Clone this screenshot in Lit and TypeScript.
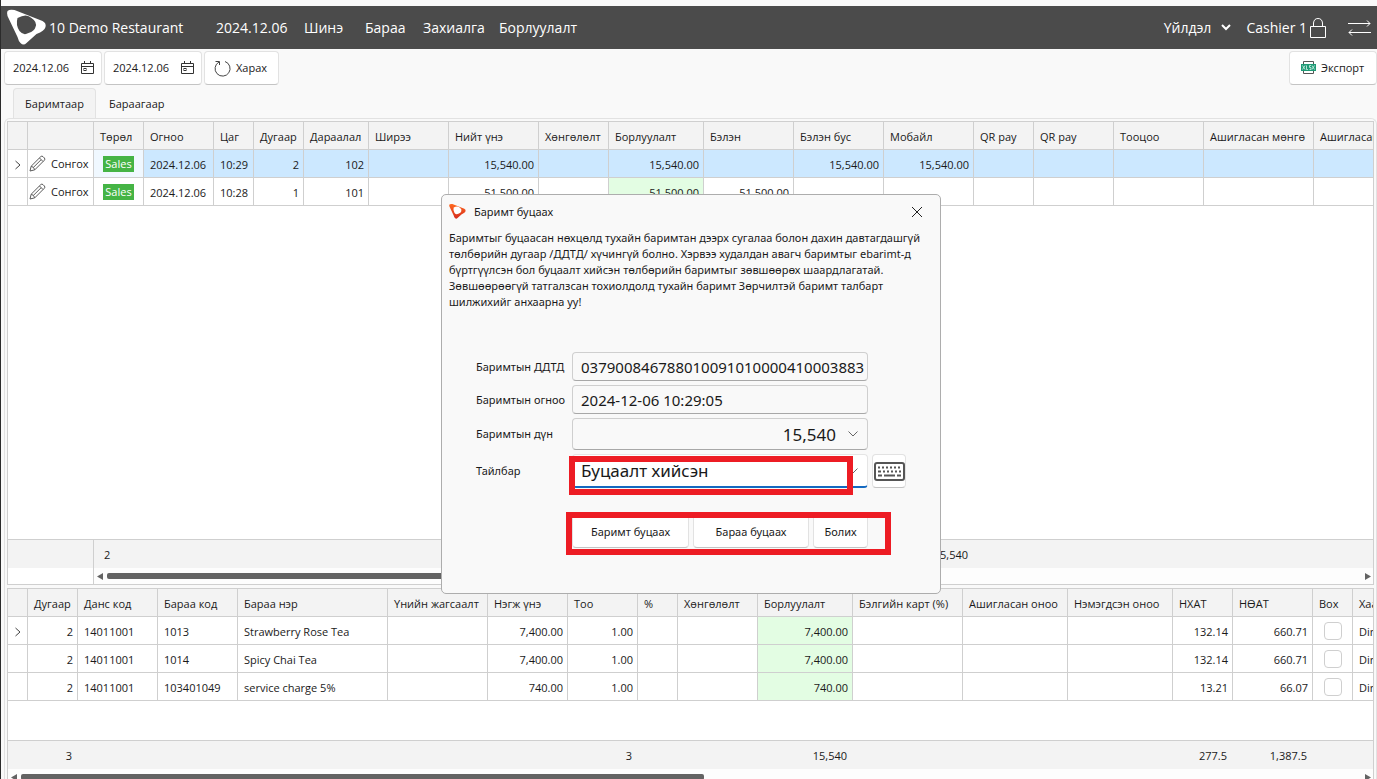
import { LitElement, html, css, nothing } from "lit";
import { customElement } from "lit/decorators.js";
import { classMap } from "lit/directives/class-map.js";

interface Column {
  title: string;
  width: number;
  align?: "right" | "center";
  green?: boolean;
  total?: string;
  totalLeft?: boolean;
}

type Row = Record<number, unknown>;

const SHAPE_OUTER = "M1 2Q3 0 8 1L36 12Q40 14 39 18Q38 22 30 25L20 34Q17 37 14 34Q12 32 11 28L1 7Q0 4 1 2Z";
const SHAPE_INNER = "M11 9Q20 4 25 9Q31 13 29 18Q28 22 22 24Q17 27 13 22Q9 16 11 9Z";

const chevronRight = html`<svg width="8" height="10" viewBox="0 0 8 10" fill="none" stroke="#444"><path d="M1.5 1L6 5L1.5 9" /></svg>`;
const chevronDown = html`<svg width="12" height="8" viewBox="0 0 12 8" fill="none" stroke="#666"><path d="M1.5 1.5L6 6L10.5 1.5" /></svg>`;
const pencil = html`<svg width="17" height="17" viewBox="0 0 17 17" fill="none" stroke="#5a5a5a">
  <path d="M1 16L2.2 11.2L11.8 1.6Q12.8 .6 14 1.6L15.4 3Q16.4 4.2 15.4 5.2L5.8 14.8Z" />
  <path d="M10.5 3L14 6.5M2.2 11.2Q4.8 11.8 5.8 14.8M12 4.8L4.3 12.5" />
</svg>`;
const calendar = html`<svg width="13" height="14" viewBox="0 0 13 14" fill="none" stroke="#333">
  <path d="M.5 2.5H12.5V12.5H.5ZM.5 5.5H12.5M3.5 0V3M9.5 0V3" /><rect x="3" y="7.5" width="2" height="2" />
</svg>`;

@customElement("data-grid")
export class DataGrid extends LitElement {
  static properties = {
    columns: { attribute: false },
    rows: { attribute: false },
    selected: { type: Number },
    frozen: { type: Boolean },
    label: { type: String },
  };
  declare columns: Column[];
  declare rows: Row[];
  declare selected: number;
  declare frozen: boolean;
  declare label: string;

  constructor() {
    super();
    this.columns = [];
    this.rows = [];
    this.selected = -1;
    this.frozen = false;
    this.label = "";
  }

  static styles = css`
    :host {
      display: flex;
      flex-direction: column;
      min-width: 0;
      border: 1px solid #cfcfcf;
      background: #fff;
      overflow: hidden;
      box-sizing: border-box;
    }
    table {
      table-layout: fixed;
      border-collapse: separate;
      border-spacing: 0;
      width: max-content;
      min-width: 100%;
    }
    th,
    td {
      box-sizing: border-box;
      height: 28px;
      padding: 2px 4px 0 6px;
      border-right: 1px solid #cfcfcf;
      border-bottom: 1px solid #cfcfcf;
      font-weight: 400;
      text-align: left;
      white-space: nowrap;
      overflow: hidden;
      line-height: 16px;
    }
    th {
      background: #f3f3f3;
    }
    .right {
      text-align: right;
    }
    .center {
      text-align: center;
    }
    td.tight {
      padding: 0;
    }
    .green {
      background: #e3fde3;
    }
    .selected td {
      background: #cce8ff;
    }
    .selected td.plain {
      background: #fff;
    }
    .selected td.focus {
      background: #f0f8ff;
    }
    .indicator svg {
      vertical-align: middle;
    }
    .fill {
      flex: 1;
      overflow: hidden;
    }
    .totals {
      border-top: 1px solid #cfcfcf;
      background: #f3f3f3;
    }
    .totals td {
      border-right-color: transparent;
      border-bottom: 0;
      padding-right: 5px;
      padding-left: 10px;
    }
    .totals td.edge {
      border-right-color: #cfcfcf;
    }
    .scroll {
      display: flex;
      height: 16px;
      background: #fdfdfd;
    }
    .stub {
      box-sizing: border-box;
      width: 86px;
      border-right: 1px solid #cfcfcf;
      background: #fff;
    }
    .bar {
      flex: 1;
      display: flex;
      padding: 5px 2px 0 3px;
      gap: 4px;
    }
    .bar svg {
      flex: none;
    }
    .track {
      flex: 1;
    }
    .thumb {
      width: 51%;
      height: 6px;
      border-radius: 2px;
      background: #636363;
    }
    .frozen .thumb {
      width: 60%;
    }
  `;

  private cols() {
    return html`<colgroup>${this.columns.map((c) => html`<col style="width:${c.width}px" />`)}</colgroup>`;
  }

  render() {
    const last = this.columns.length - 1;
    return html`
      <div class="fill">
        <table aria-label=${this.label}>
          ${this.cols()}
          <thead>
            <tr>${this.columns.map((c) => html`<th scope="col">${c.title}</th>`)}</tr>
          </thead>
          <tbody>
            ${this.rows.map(
              (row, r) => html`<tr class=${classMap({ selected: r === this.selected })}>
                ${this.columns.map(
                  (c, i) => html`<td
                    class=${classMap({
                      right: c.align === "right",
                      center: c.align === "center" || i === 0 || (this.frozen && i === 2),
                      green: !!c.green,
                      tight: i === 0 || c.align === "center" || (this.frozen && i < 3),
                      indicator: i === 0,
                      plain: this.frozen && i < 2,
                      focus: this.frozen && i === 2,
                    })}
                  >${row[i] ?? nothing}</td>`
                )}
              </tr>`
            )}
          </tbody>
        </table>
      </div>
      <div class="totals">
        <table aria-label="${this.label} дүн">
          ${this.cols()}
          <tbody>
            <tr>
              ${this.columns.map(
                (c, i) => html`<td class=${classMap({ right: !c.totalLeft, edge: (this.frozen && i === 1) || i === last })}>${c.total ?? nothing}</td>`
              )}
            </tr>
          </tbody>
        </table>
      </div>
      <div class=${classMap({ scroll: true, frozen: this.frozen })}>
        ${this.frozen ? html`<div class="stub"></div>` : nothing}
        <div class="bar">
          <svg width="6" height="7" viewBox="0 0 6 7"><path d="M6 0V7L0 3.5Z" fill="#636363" /></svg>
          <div class="track"><div class="thumb"></div></div>
          <svg width="6" height="7" viewBox="0 0 6 7"><path d="M0 0V7L6 3.5Z" fill="#636363" /></svg>
        </div>
      </div>
    `;
  }
}

@customElement("pick-button")
export class PickButton extends LitElement {
  static styles = css`
    :host {
      display: block;
    }
    button {
      display: flex;
      align-items: center;
      gap: 5px;
      width: 100%;
      height: 27px;
      margin: 0;
      padding: 0;
      border: 0;
      border-radius: 4px;
      background: #fff;
      font: inherit;
      color: inherit;
    }
    svg {
      margin-left: 1px;
    }
  `;
  render() {
    return html`<button type="button">${pencil}<span>Сонгох</span></button>`;
  }
}

@customElement("type-badge")
export class TypeBadge extends LitElement {
  static styles = css`
    :host {
      display: inline-block;
      padding: 0 2px;
      background: #45b445;
      color: #fff;
      line-height: 16px;
    }
  `;
  render() {
    return html`<slot></slot>`;
  }
}

@customElement("box-check")
export class BoxCheck extends LitElement {
  static styles = css`
    :host {
      display: flex;
      justify-content: center;
    }
    input {
      appearance: none;
      box-sizing: border-box;
      width: 18px;
      height: 18px;
      margin: 0;
      border: 1px solid #cfcfcf;
      border-radius: 4px;
      background: #fff;
    }
  `;
  render() {
    return html`<input type="checkbox" aria-label="Box" />`;
  }
}

const pick = html`<pick-button></pick-button>`;
const sales = html`<type-badge>Sales</type-badge>`;
const check = html`<box-check></box-check>`;

const receiptColumns: Column[] = [
  { title: "", width: 20 },
  { title: "", width: 66 },
  { title: "Төрөл", width: 50, total: "2", totalLeft: true },
  { title: "Огноо", width: 70 },
  { title: "Цаг", width: 40 },
  { title: "Дугаар", width: 50, align: "right" },
  { title: "Дараалал", width: 65, align: "right" },
  { title: "Ширээ", width: 80 },
  { title: "Нийт үнэ", width: 90, align: "right" },
  { title: "Хөнгөлөлт", width: 70, align: "right" },
  { title: "Борлуулалт", width: 95, align: "right", green: true },
  { title: "Бэлэн", width: 90, align: "right" },
  { title: "Бэлэн бус", width: 90, align: "right" },
  { title: "Мобайл", width: 90, align: "right", total: "15,540" },
  { title: "QR pay", width: 60, align: "right" },
  { title: "QR pay", width: 80, align: "right" },
  { title: "Тооцоо", width: 90, align: "right" },
  { title: "Ашигласан мөнгө", width: 110, align: "right" },
  { title: "Ашигласан оноо", width: 110, align: "right" },
];

const receiptRows: Row[] = [
  { 0: chevronRight, 1: pick, 2: sales, 3: "2024.12.06", 4: "10:29", 5: "2", 6: "102", 8: "15,540.00", 10: "15,540.00", 12: "15,540.00", 13: "15,540.00" },
  { 1: pick, 2: sales, 3: "2024.12.06", 4: "10:28", 5: "1", 6: "101", 8: "51,500.00", 10: "51,500.00", 11: "51,500.00" },
];

const itemColumns: Column[] = [
  { title: "", width: 20 },
  { title: "Дугаар", width: 50, align: "right", total: "3" },
  { title: "Данс код", width: 80 },
  { title: "Бараа код", width: 80 },
  { title: "Бараа нэр", width: 150 },
  { title: "Үнийн жагсаалт", width: 100 },
  { title: "Нэгж үнэ", width: 80, align: "right" },
  { title: "Тоо", width: 70, align: "right", total: "3" },
  { title: "%", width: 40, align: "right" },
  { title: "Хөнгөлөлт", width: 80, align: "right" },
  { title: "Борлуулалт", width: 95, align: "right", green: true, total: "15,540" },
  { title: "Бэлгийн карт (%)", width: 110, align: "right" },
  { title: "Ашигласан оноо", width: 105, align: "right" },
  { title: "Нэмэгдсэн оноо", width: 105, align: "right" },
  { title: "НХАТ", width: 60, align: "right", total: "277.5" },
  { title: "НӨАТ", width: 80, align: "right", total: "1,387.5" },
  { title: "Box", width: 40, align: "center" },
  { title: "Хаанаас", width: 80 },
];

const itemRows: Row[] = [
  { 0: chevronRight, 1: "2", 2: "14011001", 3: "1013", 4: "Strawberry Rose Tea", 6: "7,400.00", 7: "1.00", 10: "7,400.00", 14: "132.14", 15: "660.71", 16: check, 17: "Dine in" },
  { 1: "2", 2: "14011001", 3: "1014", 4: "Spicy Chai Tea", 6: "7,400.00", 7: "1.00", 10: "7,400.00", 14: "132.14", 15: "660.71", 16: check, 17: "Dine in" },
  { 1: "2", 2: "14011001", 3: "103401049", 4: "service charge 5%", 6: "740.00", 7: "1.00", 10: "740.00", 14: "13.21", 15: "66.07", 16: check, 17: "Dine in" },
];

@customElement("refund-dialog")
export class RefundDialog extends LitElement {
  static styles = css`
    :host {
      display: block;
      box-sizing: border-box;
      border: 1px solid #adadad;
      border-radius: 5px;
      background: #f9f9f9;
      font-family: "Noto Sans", "Open Sans", sans-serif;
      font-size: 11px;
      line-height: 16px;
    }
    button,
    input,
    select {
      box-sizing: border-box;
      font-family: inherit;
      color: #1a1a1a;
      margin: 0;
    }
    .title {
      display: flex;
      align-items: center;
      height: 33px;
      padding: 0 15px 0 7px;
    }
    h2 {
      flex: 1;
      margin: 0 0 0 8px;
      font-size: 11px;
      font-weight: 400;
    }
    .close {
      display: flex;
      padding: 2px;
      border: 0;
      background: none;
    }
    .message {
      margin: 2px 7px 0;
      white-space: nowrap;
    }
    form {
      display: grid;
      grid-template-columns: 96px 296px 38px;
      row-gap: 4px;
      align-items: center;
      margin: 42px 34px 0;
    }
    label {
      grid-column: 1;
      white-space: nowrap;
    }
    .field {
      box-sizing: border-box;
      display: flex;
      align-items: center;
      height: 29px;
      padding: 0 3px 0 8px;
      border: 1px solid #cfcfcf;
      border-bottom-color: #a8a8a8;
      border-radius: 4px;
      grid-column: 2;
    }
    .field input,
    .field select {
      flex: 1;
      min-width: 0;
      width: 100%;
      height: 26px;
      padding: 0;
      border: 0;
      outline: 0;
      background: none;
      font-size: 15px;
    }
    .field.tall {
      height: 32px;
      padding-right: 8px;
      gap: 11px;
    }
    .field.tall input,
    .field.tall select {
      font-size: 17px;
    }
    .field select {
      appearance: none;
      text-align-last: right;
    }
    .field.active {
      height: 34px;
      background: #fff;
      border-color: #e5e5e5;
      border-bottom: 2px solid #1469c0;
    }
    .keyboard,
    .action {
      border: 1px solid #e2e2e2;
      border-bottom-color: #c4c4c4;
      border-radius: 4px;
      background: #fff;
    }
    .keyboard {
      display: flex;
      align-items: center;
      justify-content: center;
      width: 34px;
      height: 34px;
      margin-left: 4px;
      padding: 0;
    }
    .actions {
      display: grid;
      grid-template-columns: 117px 116px 55px;
      gap: 4px;
      margin: 26px 0 0 130px;
    }
    .action {
      height: 34px;
      padding: 0;
      font-size: 11px;
    }
    .mark {
      position: absolute;
      box-sizing: border-box;
      border: 6px solid #ed1c24;
      pointer-events: none;
    }
    .mark.reason {
      left: 127px;
      top: 261px;
      width: 284px;
      height: 39px;
    }
    .mark.choices {
      left: 124px;
      top: 317px;
      width: 325px;
      height: 43px;
    }
  `;
  render() {
    return html`
      <div class="title">
        <svg width="17" height="17" viewBox="0 0 40 37">
          <defs><linearGradient id="g" x1="0" y1="0" x2="0" y2="1"><stop offset="0" stop-color="#ff6a1f" /><stop offset="1" stop-color="#d52b1e" /></linearGradient></defs>
          <path d=${SHAPE_OUTER} fill="url(#g)" /><path d=${SHAPE_INNER} fill="#fff" />
        </svg>
        <h2>Баримт буцаах</h2>
        <button class="close" type="button" aria-label="Хаах">
          <svg width="12" height="12" viewBox="0 0 12 12" stroke="#222"><path d="M1 1L11 11M11 1L1 11" /></svg>
        </button>
      </div>
      <p class="message">
        Баримтыг буцаасан нөхцөлд тухайн баримтан дээрх сугалаа болон дахин давтагдашгүй<br />
        төлбөрийн дугаар /ДДТД/ хүчингүй болно. Хэрвээ худалдан авагч баримтыг ebarimt-д<br />
        бүртгүүлсэн бол буцаалт хийсэн төлбөрийн баримтыг зөвшөөрөх шаардлагатай.<br />
        Зөвшөөрөөгүй татгалзсан тохиолдолд тухайн баримт Зөрчилтэй баримт талбарт<br />
        шилжихийг анхаарна уу!
      </p>
      <form>
        <label for="code">Баримтын ДДТД</label>
        <div class="field"><input id="code" readonly value="037900846788010091010000410003883" /></div>
        <label for="date">Баримтын огноо</label>
        <div class="field"><input id="date" readonly value="2024-12-06 10:29:05" /></div>
        <label for="amount">Баримтын дүн</label>
        <div class="field tall"><select id="amount"><option>15,540</option></select>${chevronDown}</div>
        <label for="reason">Тайлбар</label>
        <div class="field tall active"><input id="reason" value="Буцаалт хийсэн" />${chevronDown}</div>
        <button class="keyboard" type="button" aria-label="Гар">
          <svg width="31" height="19" viewBox="0 0 31 19" fill="none" stroke="#555">
            <rect x="1" y="1" width="29" height="17" rx="2" stroke-width="2" />
            <path d="M4 5.5H27" stroke-width="2" stroke-dasharray="2 2" />
            <path d="M4 9.5H7M9 9.5H11M13 9.5H15M17 9.5H19M21 9.5H23M25 9.5H27M4 13.5H8M10 13.5H21M23 13.5H27" stroke-width="2" />
          </svg>
        </button>
      </form>
      <div class="actions">
        <button class="action" type="button">Баримт буцаах</button>
        <button class="action" type="button">Бараа буцаах</button>
        <button class="action" type="button">Болих</button>
      </div>
      <div class="mark reason"></div>
      <div class="mark choices"></div>
    `;
  }
}

@customElement("app-root")
export class AppRoot extends LitElement {
  static styles = css`
    :host {
      position: relative;
      display: flex;
      flex-direction: column;
      box-sizing: border-box;
      height: 100vh;
      overflow: hidden;
      border-left: 1px solid #2b2b2b;
      padding-top: 6px;
      background: #f9f9f9;
      color: #1a1a1a;
      font-family: "Open Sans", "Noto Sans", sans-serif;
      font-size: 11px;
      line-height: 16px;
    }
    button,
    input {
      box-sizing: border-box;
      font: inherit;
      color: inherit;
      margin: 0;
    }
    header {
      flex: none;
      display: flex;
      align-items: center;
      height: 43px;
      padding: 0 6px 0 5px;
      background: #4b4b4b;
      color: #fff;
      font-size: 14px;
    }
    header a,
    header button {
      color: inherit;
      text-decoration: none;
      white-space: nowrap;
      background: none;
      border: 0;
      padding: 0;
    }
    .brand {
      display: flex;
      align-items: center;
      gap: 2px;
      width: 210px;
    }
    nav {
      flex: 1;
      display: grid;
      grid-template-columns: 88px 61px 58px 76px auto;
      justify-content: start;
    }
    .menu {
      display: flex;
      align-items: center;
      gap: 10px;
    }
    .user {
      display: flex;
      align-items: center;
      gap: 3px;
      margin: 0 22px 0 15px;
    }
    .swap {
      display: flex;
    }
    .toolbar {
      flex: none;
      display: flex;
      gap: 2px;
      padding: 2px 0 3px 3px;
    }
    .tool {
      box-sizing: border-box;
      display: flex;
      align-items: center;
      height: 34px;
      border: 1px solid #e2e2e2;
      border-bottom-color: #c4c4c4;
      border-radius: 4px;
      background: #fff;
    }
    .date {
      width: 98px;
      padding: 0 7px 0 8px;
    }
    .date input {
      flex: 1;
      min-width: 0;
      width: 60px;
      padding: 0;
      border: 0;
      background: none;
    }
    .date button {
      display: flex;
      padding: 0;
      border: 0;
      background: none;
    }
    .refresh {
      gap: 5px;
      width: 75px;
      padding: 0 0 0 9px;
    }
    .export {
      gap: 5px;
      width: 88px;
      margin-left: auto;
      padding: 0 0 0 11px;
    }
    .tabs {
      flex: none;
      display: flex;
      padding-left: 12px;
    }
    .tab {
      height: 30px;
      padding: 0 13px 0 12px;
      border: 1px solid transparent;
      border-bottom: 0;
      background: none;
    }
    .tab.on {
      width: 83px;
      padding: 0;
      border-color: #e2e2e2;
      border-radius: 4px 4px 0 0;
      background: #f3f3f3;
    }
    main {
      flex: 1;
      min-height: 0;
      display: flex;
      flex-direction: column;
      gap: 3px;
      margin: 0 0 0 3px;
      padding: 2px 2px 0 2px;
      border: 1px solid #e2e2e2;
      border-bottom: 0;
      border-radius: 6px 6px 0 0;
    }
    .receipts {
      flex: 1;
      min-height: 0;
    }
    .items {
      flex: none;
      height: 198px;
      margin-bottom: -7px;
    }
    .dialog {
      position: absolute;
      left: 440px;
      top: 194px;
      width: 500px;
      height: 400px;
    }
  `;
  render() {
    return html`
      <header>
        <a class="brand" href="#">
          <svg width="41" height="37" viewBox="0 0 40 37"><path d=${SHAPE_OUTER} fill="#fff" /><path d=${SHAPE_INNER} fill="#4b4b4b" /></svg>
          <span>10 Demo Restaurant</span>
        </a>
        <nav>
          <a href="#">2024.12.06</a><a href="#">Шинэ</a><a href="#">Бараа</a><a href="#">Захиалга</a><a href="#">Борлуулалт</a>
        </nav>
        <button class="menu" type="button">Үйлдэл
          <svg width="10" height="7" viewBox="0 0 10 7" fill="none" stroke="#fff" stroke-width="2"><path d="M1 1L5 5L9 1" /></svg>
        </button>
        <button class="user" type="button">Cashier 1
          <svg width="16" height="20" viewBox="0 0 16 20" fill="none" stroke="#fff"><path d="M.5 8.500H15.500V19.500H.5ZM3.500 8.500V5Q4 .5 8 .5Q12 .5 12.500 5V8.500" /></svg>
        </button>
        <button class="swap" type="button" aria-label="Солих">
          <svg width="23" height="18" viewBox="0 0 23 18" fill="none" stroke="#fff"><path d="M0 4.500H22M19 1.500L22 4.500L19 7.500M23 13.500H1M4 10.500L1 13.500L4 16.500" /></svg>
        </button>
      </header>
      <div class="toolbar">
        <div class="tool date"><input aria-label="Эхлэх огноо" value="2024.12.06" /><button type="button" aria-label="Эхлэх өдөр сонгох">${calendar}</button></div>
        <div class="tool date"><input aria-label="Дуусах огноо" value="2024.12.06" /><button type="button" aria-label="Дуусах өдөр сонгох">${calendar}</button></div>
        <button class="tool refresh" type="button">
          <svg width="17" height="17" viewBox="0 0 17 17" fill="none" stroke="#444"><path d="M11 1.500A7.500 7.500 0 1 1 5 2M5.500 5V1.500H1.500" /></svg>
          Харах
        </button>
        <button class="tool export" type="button">
          <svg width="15" height="14" viewBox="0 0 15 14">
            <path d="M2.500 3V.5H12.500V3M2.500 10V12.500H12.500V10" fill="none" stroke="#555" />
            <rect y="3" width="15" height="7" fill="#1f9b76" />
            <path d="M1.500 4.500L4 8.500M4 4.500L1.500 8.500M5.500 4.500V8.500H7M10 4.500H8.500V6.500H10V8.500H8.500M11 4.500L13.500 8.500M13.500 4.500L11 8.500" fill="none" stroke="#d8f3ea" stroke-width=".8" />
          </svg>
          Экспорт
        </button>
      </div>
      <div class="tabs" role="tablist">
        <button class="tab on" role="tab" aria-selected="true">Баримтаар</button>
        <button class="tab" role="tab" aria-selected="false">Бараагаар</button>
      </div>
      <main>
        <data-grid class="receipts" label="Баримт" frozen .selected=${0} .columns=${receiptColumns} .rows=${receiptRows}></data-grid>
        <data-grid class="items" label="Бараа" .columns=${itemColumns} .rows=${itemRows}></data-grid>
      </main>
      <refund-dialog class="dialog" role="dialog" aria-label="Баримт буцаах"></refund-dialog>
    `;
  }
}
